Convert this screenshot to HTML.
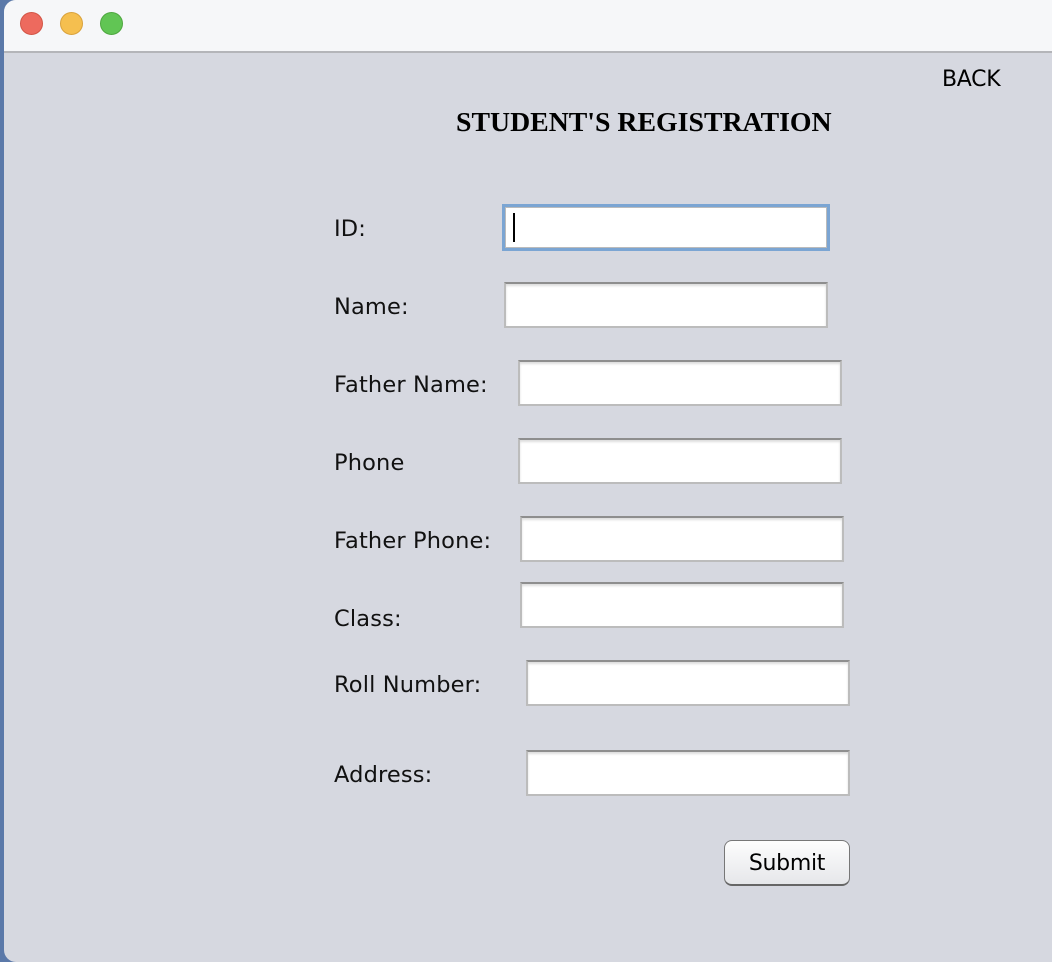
<!DOCTYPE html>
<html><head><style>
body{margin:0;width:1052px;height:962px;overflow:hidden;background:#5b79a9;font-family:"DejaVu Sans","Liberation Sans",sans-serif;position:relative}
.win{position:absolute;left:4px;top:0;width:1060px;height:962px;background:#d6d8e0;border-radius:12px 0 0 12px;overflow:hidden}
.tb{position:absolute;left:0;top:0;right:0;height:51px;background:#f6f7f9;border-bottom:2px solid #b4b5b9}
.dot{position:absolute;top:12px;width:23px;height:23px;border-radius:50%}
.l{position:absolute;left:330px;font-size:22.5px;color:#111;letter-spacing:0.15px}
.f{position:absolute;height:42px;background:#fff;border:2px solid #bcbcbc;border-top-color:#8e8e8e;box-sizing:border-box;box-shadow:inset 0 2px 2px #ddd}
</style></head><body>
<div class="win">
<div class="tb">
<div class="dot" style="left:16px;background:#ed6a5e;border:1px solid #d25546;box-sizing:border-box"></div>
<div class="dot" style="left:56px;background:#f5bf4f;border:1px solid #d9a23c;box-sizing:border-box"></div>
<div class="dot" style="left:96px;background:#61c554;border:1px solid #4ea73f;box-sizing:border-box"></div>
</div>
<div style="position:absolute;left:938px;top:67px;font-size:22px;letter-spacing:-0.3px">BACK</div>
<div style="position:absolute;left:452px;top:107px;font-family:'Liberation Serif',serif;font-weight:bold;font-size:27.8px">STUDENT'S REGISTRATION</div>
<div class="l" style="top:216px">ID:</div>
<div class="l" style="top:294px">Name:</div>
<div class="l" style="top:372px">Father Name:</div>
<div class="l" style="top:450px">Phone</div>
<div class="l" style="top:528px">Father Phone:</div>
<div class="l" style="top:606px">Class:</div>
<div class="l" style="top:672px">Roll Number:</div>
<div class="l" style="top:762px">Address:</div>
<div class="f" style="left:498px;top:204px;width:328px;height:47px;border:3px solid #7ba5d3;box-shadow:inset 0 0 0 1px #bbb"><div style="position:absolute;left:8px;top:6px;width:2px;height:29px;background:#000"></div></div>
<div class="f" style="left:500px;top:282px;width:324px;height:46px"></div>
<div class="f" style="left:514px;top:360px;width:324px;height:46px"></div>
<div class="f" style="left:514px;top:438px;width:324px;height:46px"></div>
<div class="f" style="left:516px;top:516px;width:324px;height:46px"></div>
<div class="f" style="left:516px;top:582px;width:324px;height:46px"></div>
<div class="f" style="left:522px;top:660px;width:324px;height:46px"></div>
<div class="f" style="left:522px;top:750px;width:324px;height:46px"></div>
<div style="position:absolute;left:720px;top:840px;width:126px;height:46px;box-sizing:border-box;border:1.5px solid #777;border-bottom:2.5px solid #666;border-radius:8px;background:linear-gradient(#fdfdfd,#e6e7ea);font-size:22px;letter-spacing:-0.3px;text-align:center;line-height:46px">Submit</div>
</div>
</body></html>
